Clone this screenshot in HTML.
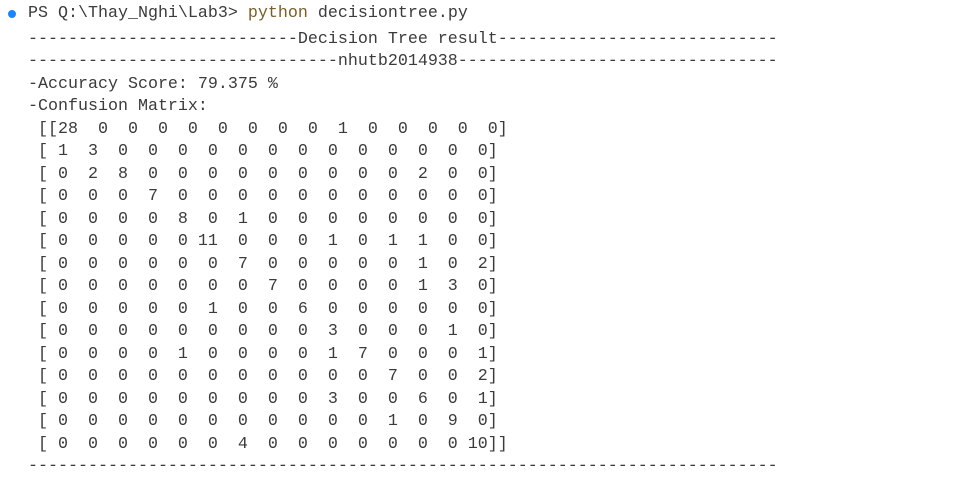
<!DOCTYPE html>
<html><head><meta charset="utf-8"><style>
html,body{margin:0;padding:0;background:#fff;width:958px;height:484px;overflow:hidden}
pre{margin:0;font-family:"Liberation Mono",monospace;font-size:16.67px;line-height:22.5px;color:#3b3b3b;white-space:pre}
#l1{position:absolute;left:28px;top:3px}
#rest{position:absolute;left:28px;top:28.5px}
.dot{position:absolute;left:8px;top:10px;width:8px;height:8px;border-radius:50%;background:#1a85ff}
.y{color:#795e26}
</style></head><body>
<div class="dot"></div>
<pre id="l1">PS Q:\Thay_Nghi\Lab3&gt; <span class="y">python</span> decisiontree.py</pre>
<pre id="rest">---------------------------Decision Tree result----------------------------
-------------------------------nhutb2014938--------------------------------
-Accuracy Score: 79.375 %
-Confusion Matrix:
 [[28  0  0  0  0  0  0  0  0  1  0  0  0  0  0]
 [ 1  3  0  0  0  0  0  0  0  0  0  0  0  0  0]
 [ 0  2  8  0  0  0  0  0  0  0  0  0  2  0  0]
 [ 0  0  0  7  0  0  0  0  0  0  0  0  0  0  0]
 [ 0  0  0  0  8  0  1  0  0  0  0  0  0  0  0]
 [ 0  0  0  0  0 11  0  0  0  1  0  1  1  0  0]
 [ 0  0  0  0  0  0  7  0  0  0  0  0  1  0  2]
 [ 0  0  0  0  0  0  0  7  0  0  0  0  1  3  0]
 [ 0  0  0  0  0  1  0  0  6  0  0  0  0  0  0]
 [ 0  0  0  0  0  0  0  0  0  3  0  0  0  1  0]
 [ 0  0  0  0  1  0  0  0  0  1  7  0  0  0  1]
 [ 0  0  0  0  0  0  0  0  0  0  0  7  0  0  2]
 [ 0  0  0  0  0  0  0  0  0  3  0  0  6  0  1]
 [ 0  0  0  0  0  0  0  0  0  0  0  1  0  9  0]
 [ 0  0  0  0  0  0  4  0  0  0  0  0  0  0 10]]
---------------------------------------------------------------------------</pre>
</body></html>
